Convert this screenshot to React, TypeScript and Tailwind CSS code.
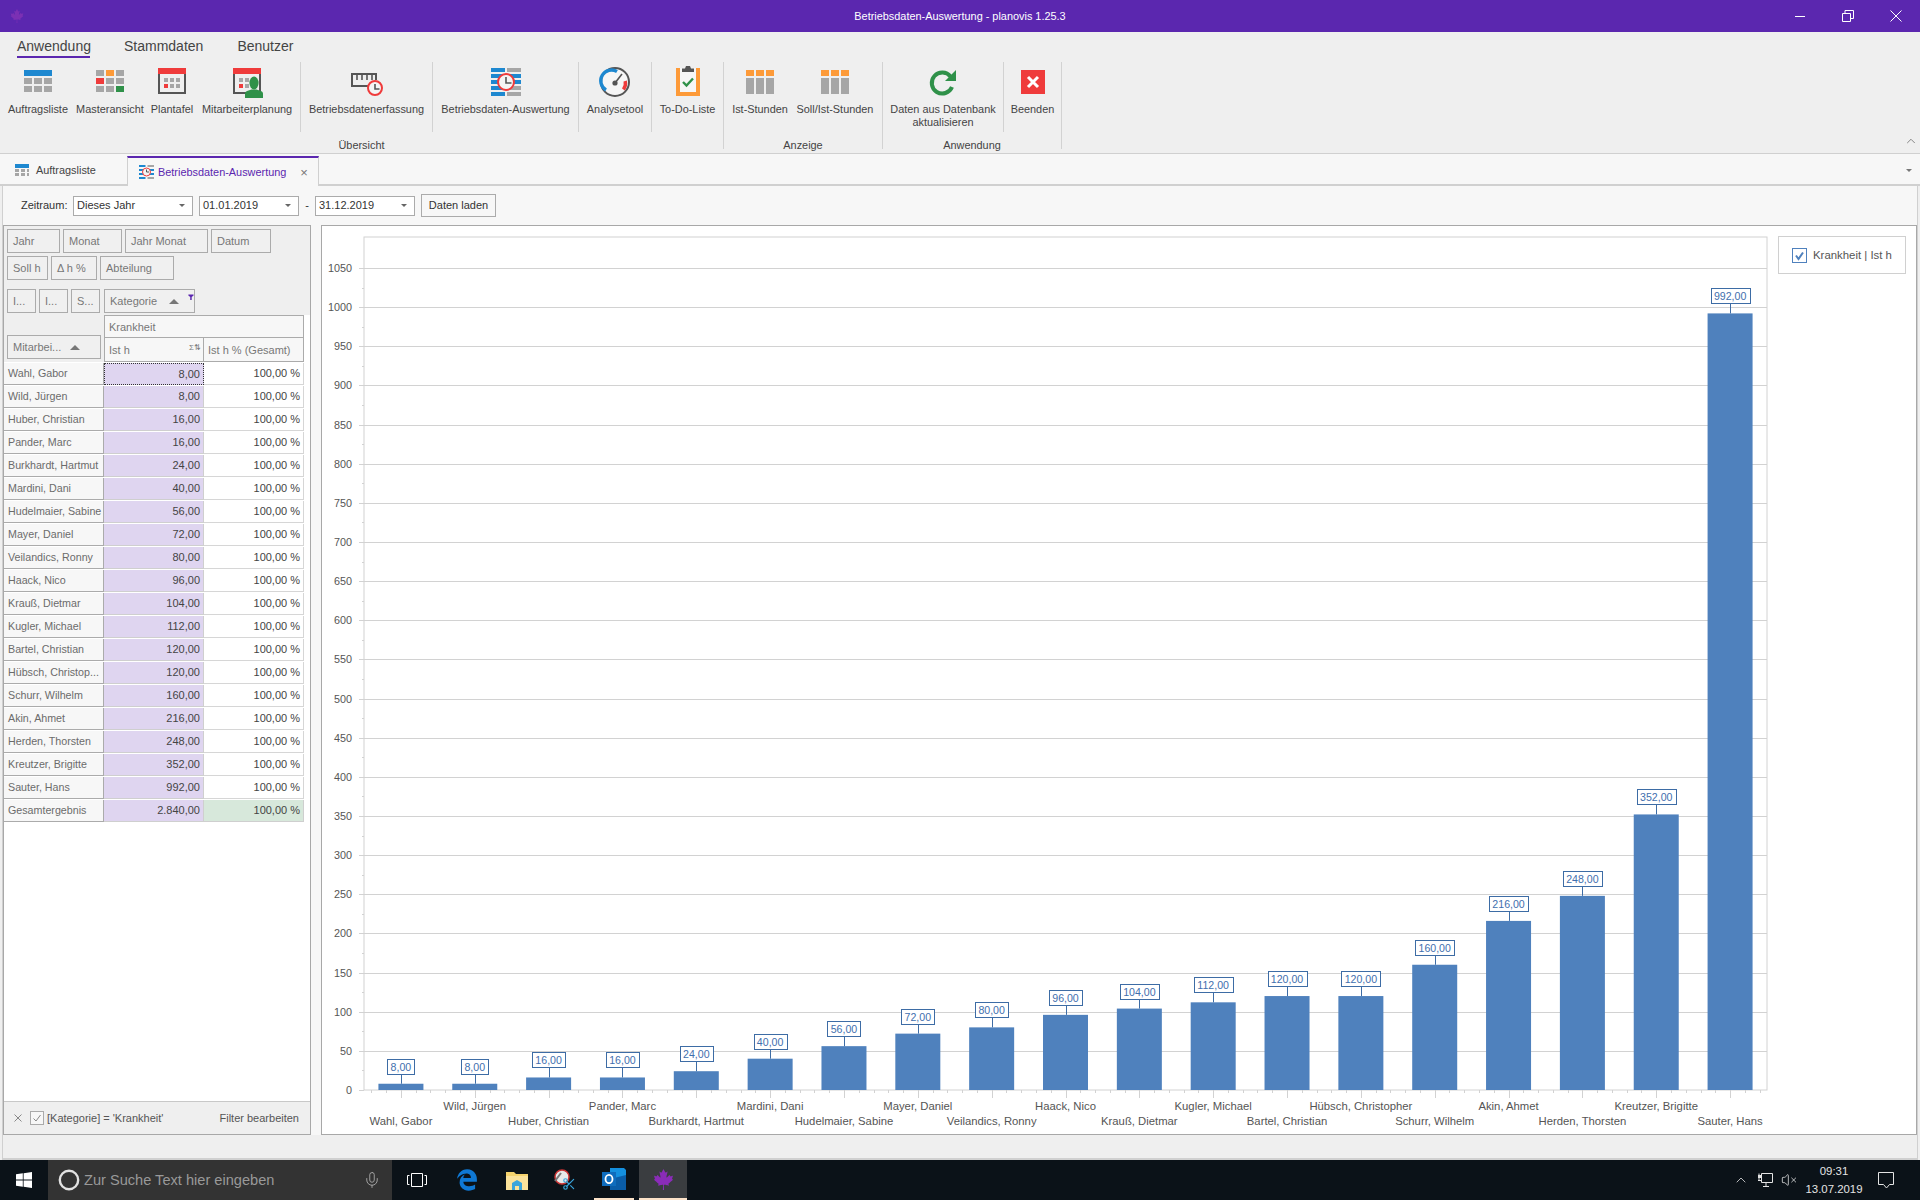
import { ChevronUp, Mic, Scissors, VolumeX } from "lucide-react";
import { FaCanadianMapleLeaf } from "react-icons/fa";
import { FaEdgeLegacy } from "react-icons/fa6";
import type { ReactNode } from "react";

const ROWS: { name: string; short?: string; value: number }[] = [
  { name: "Wahl, Gabor", value: 8 },
  { name: "Wild, Jürgen", value: 8 },
  { name: "Huber, Christian", value: 16 },
  { name: "Pander, Marc", value: 16 },
  { name: "Burkhardt, Hartmut", value: 24 },
  { name: "Mardini, Dani", value: 40 },
  { name: "Hudelmaier, Sabine", value: 56 },
  { name: "Mayer, Daniel", value: 72 },
  { name: "Veilandics, Ronny", value: 80 },
  { name: "Haack, Nico", value: 96 },
  { name: "Krauß, Dietmar", value: 104 },
  { name: "Kugler, Michael", value: 112 },
  { name: "Bartel, Christian", value: 120 },
  { name: "Hübsch, Christopher", short: "Hübsch, Christop...", value: 120 },
  { name: "Schurr, Wilhelm", value: 160 },
  { name: "Akin, Ahmet", value: 216 },
  { name: "Herden, Thorsten", value: 248 },
  { name: "Kreutzer, Brigitte", value: 352 },
  { name: "Sauter, Hans", value: 992 },
];

const GRAY = "#a6a6a6";
const RED = "#ef3b3b";
const BLUE = "#1e88d0";
const GREEN = "#2f9149";
const ORANGE = "#fd9a38";
const DARK = "#555555";

function Cells({ x, y, w, h, fills }: { x: number; y: number; w: number; h: number; fills: string[][] }) {
  return (
    <>
      {fills.map((row, r) =>
        row.map((f, c) => <rect key={`${r}-${c}`} x={x + c * (w + 2)} y={y + r * (h + 2)} width={w} height={h} fill={f} />)
      )}
    </>
  );
}

// ribbon icons use real screen coordinates in their viewBox
function RibbonSvg({ x, w, children }: { x: number; w: number; children: ReactNode }) {
  return (
    <svg width={w} height={38} viewBox={`${x} 62 ${w} 38`} className="block">
      {children}
    </svg>
  );
}

function CalendarShape({ x }: { x: number }) {
  return (
    <>
      <rect x={x + 1} y={69} width={26} height={24} fill="none" stroke={DARK} strokeWidth={2} />
      <rect x={x} y={68} width={28} height={6} fill={RED} />
      <Cells x={x + 6} y={78} w={4} h={4} fills={[[GRAY, GRAY, GRAY], [RED, GRAY, GRAY]]} />
    </>
  );
}

function ClockShape({ cx, cy, r }: { cx: number; cy: number; r: number }) {
  return (
    <>
      <circle cx={cx} cy={cy} r={r} fill="#f4f4f4" stroke={RED} strokeWidth={2} />
      <path d={`M${cx} ${cy - r + 3}V${cy + 1}H${cx + r - 2.5}`} fill="none" stroke={DARK} strokeWidth={1.6} />
    </>
  );
}

const ICONS: Record<string, ReactNode> = {
  auftrag: (
    <RibbonSvg x={18} w={40}>
      <rect x={24} y={70} width={28} height={6} fill={BLUE} />
      <Cells x={24} y={78} w={8} h={6} fills={[[GRAY, GRAY, GRAY], [GRAY, GRAY, GRAY]]} />
    </RibbonSvg>
  ),
  master: (
    <RibbonSvg x={90} w={40}>
      <Cells x={96} y={70} w={8} h={6} fills={[[GRAY, ORANGE, GRAY], [RED, GRAY, GRAY], [GRAY, GRAY, GREEN]]} />
    </RibbonSvg>
  ),
  plan: (
    <RibbonSvg x={153} w={40}>
      <CalendarShape x={159} />
    </RibbonSvg>
  ),
  mitarbeiter: (
    <RibbonSvg x={227} w={40}>
      <CalendarShape x={233} />
      <ellipse cx={254} cy={83} rx={4.6} ry={6.4} fill={GREEN} />
      <path d="M245 98v-4.5q0-2 2-2.5l4.5-1.5h5l4.5 1.5q2 .5 2 2.5V98z" fill={GREEN} />
    </RibbonSvg>
  ),
  erfassung: (
    <RibbonSvg x={346} w={40}>
      <path d="M367 86H351V74H375V80" fill="none" stroke={DARK} strokeWidth={2} />
      <path d="M356 75v5M361 75v5M366 75v5M371 75v5" stroke={DARK} strokeWidth={1.6} />
      <ClockShape cx={374} cy={88} r={7} />
    </RibbonSvg>
  ),
  auswertung: (
    <RibbonSvg x={484} w={40}>
      <Cells x={489} y={68} w={14} h={4} fills={[[BLUE, GRAY], [BLUE, BLUE], [BLUE, BLUE], [BLUE, GRAY], [BLUE, GRAY]]} />
      <ClockShape cx={504} cy={82} r={8} />
    </RibbonSvg>
  ),
  analyse: (
    <RibbonSvg x={594} w={40}>
      <circle cx={614} cy={82} r={14} fill="#f6f6f6" stroke={DARK} strokeWidth={2} />
      <path d="M605 90a10.5 10.5 0 0 1 11-18.5" fill="none" stroke={BLUE} strokeWidth={3.4} />
      <path d="M624.2 81a10.5 10.5 0 0 1-1.8 8.6" fill="none" stroke={RED} strokeWidth={3.4} />
      <path d="M614 83l7-9" stroke={DARK} strokeWidth={1.6} />
      <circle cx={614} cy={83} r={2.6} fill={DARK} />
    </RibbonSvg>
  ),
  todo: (
    <RibbonSvg x={667} w={40}>
      <rect x={675} y={68} width={24} height={28} fill={ORANGE} />
      <rect x={679} y={68} width={16} height={24} fill="#f6f6f6" />
      <path d="M681 70v-1.500h3l1-2.500h4l1 2.500h3V72h-12z" fill={DARK} />
      <path d="M682 82l3.500 3.500 6.500-7" fill="none" stroke={GREEN} strokeWidth={2.4} />
    </RibbonSvg>
  ),
  ist: (
    <RibbonSvg x={740} w={40}>
      <Cells x={746} y={70} w={8} h={6} fills={[[ORANGE, ORANGE, ORANGE]]} />
      <Cells x={746} y={78} w={8} h={16} fills={[[GRAY, GRAY, GRAY]]} />
    </RibbonSvg>
  ),
  soll: (
    <RibbonSvg x={815} w={40}>
      <Cells x={821} y={70} w={8} h={6} fills={[[ORANGE, ORANGE, ORANGE]]} />
      <Cells x={821} y={78} w={8} h={16} fills={[[GRAY, GRAY, GRAY]]} />
    </RibbonSvg>
  ),
  refresh: (
    <RibbonSvg x={924} w={40}>
      <path d="M951.500 76.500A10.500 10.500 0 1 0 953 87" fill="none" stroke={GREEN} strokeWidth={4} />
      <path d="M957 70v11h-11z" fill={GREEN} />
    </RibbonSvg>
  ),
  beenden: (
    <RibbonSvg x={1013} w={40}>
      <rect x={1021} y={70} width={24} height={24} fill={RED} />
      <path d="M1028 77l10 10M1038 77l-10 10" stroke="#ffffff" strokeWidth={3} />
    </RibbonSvg>
  ),
};

function RibbonItem({ w, icon, children }: { w: number; icon: string; children: ReactNode }) {
  return (
    <div className="flex h-[70px] shrink-0 flex-col items-center" style={{ width: w }}>
      {ICONS[icon]}
      <div className="mt-[3px] whitespace-nowrap text-center text-[10.9px] leading-[13px] text-[#444]">{children}</div>
    </div>
  );
}

function RibbonSep() {
  return <div className="h-[70px] w-px shrink-0 bg-[#d2d2d2]" />;
}

function RibbonGroup({ label, children, className }: { label: string; children: ReactNode; className: string }) {
  return (
    <div className={`flex shrink-0 flex-col border-r border-[#d2d2d2] ${className}`}>
      <div className="flex h-[70px]">{children}</div>
      <div className="h-[17px] pt-[7px] text-center text-[10.9px] leading-[13px] text-[#444]">{label}</div>
    </div>
  );
}

function Ribbon() {
  return (
    <div className="h-[122px] shrink-0 border-b border-[#d0d0d0] bg-[#efefef]">
      <div className="flex h-[30px] pl-[17px] text-[14px] text-[#444]">
        <div className="h-[26px] w-[73px] whitespace-nowrap border-b-2 border-[#5b27af] pt-[6px] leading-[16px]">Anwendung</div>
        <div className="ml-[34px] pt-[6px] leading-[16px]">Stammdaten</div>
        <div className="ml-[34px] pt-[6px] leading-[16px]">Benutzer</div>
      </div>
      <div className="flex h-[87px]">
        <RibbonGroup label="Übersicht" className="w-[724px]">
          <div className="w-[4px] shrink-0" />
          <RibbonItem w={68} icon="auftrag">Auftragsliste</RibbonItem>
          <RibbonItem w={76} icon="master">Masteransicht</RibbonItem>
          <RibbonItem w={48} icon="plan">Plantafel</RibbonItem>
          <RibbonItem w={102} icon="mitarbeiter">Mitarbeiterplanung</RibbonItem>
          <div className="w-[2px] shrink-0" />
          <RibbonSep />
          <RibbonItem w={131} icon="erfassung">Betriebsdatenerfassung</RibbonItem>
          <RibbonSep />
          <RibbonItem w={145} icon="auswertung">Betriebsdaten-Auswertung</RibbonItem>
          <RibbonSep />
          <RibbonItem w={72} icon="analyse">Analysetool</RibbonItem>
          <RibbonSep />
          <RibbonItem w={71} icon="todo">To-Do-Liste</RibbonItem>
        </RibbonGroup>
        <RibbonGroup label="Anzeige" className="w-[159px]">
          <RibbonItem w={72} icon="ist">Ist-Stunden</RibbonItem>
          <RibbonItem w={78} icon="soll">Soll/Ist-Stunden</RibbonItem>
        </RibbonGroup>
        <RibbonGroup label="Anwendung" className="w-[179px]">
          <RibbonItem w={120} icon="refresh">
            Daten aus Datenbank
            <br />
            aktualisieren
          </RibbonItem>
          <RibbonSep />
          <RibbonItem w={57} icon="beenden">Beenden</RibbonItem>
        </RibbonGroup>
        <div className="ml-auto flex items-end pb-[1px] pr-[2px]">
          <ChevronUp size={14} strokeWidth={1.5} className="text-[#777]" />
        </div>
      </div>
    </div>
  );
}

function TitleBar() {
  return (
    <div className="grid h-[32px] shrink-0 grid-cols-[1fr_auto_1fr] items-center bg-[#5b27af] text-white">
      <div className="pl-[10px]">
        <FaCanadianMapleLeaf size={14} className="text-[#7b30b4]" />
      </div>
      <div className="text-[10.9px]">Betriebsdaten-Auswertung - planovis 1.25.3</div>
      <div className="flex justify-end">
        <div className="flex h-[32px] w-[48px] items-center justify-center">
          <div className="h-px w-[10px] bg-white" />
        </div>
        <div className="flex h-[32px] w-[48px] items-center justify-center">
          <svg width="12" height="12" viewBox="0 0 12 12" fill="none" stroke="#ffffff">
            <path d="M.5 3.500h8v8h-8zM3 3.500V.5h8.500v8H8.500" />
          </svg>
        </div>
        <div className="flex h-[32px] w-[48px] items-center justify-center">
          <svg width="12" height="12" viewBox="0 0 12 12" fill="none" stroke="#ffffff">
            <path d="M.5.5l11 11M11.500.5l-11 11" />
          </svg>
        </div>
      </div>
    </div>
  );
}

function TabBar() {
  return (
    <div className="flex h-[32px] shrink-0 border-b-2 border-[#d0d0d0] bg-[#f7f7f7] text-[10.9px]">
      <div className="flex w-[127px] items-center pt-[2px]">
        <svg width="14" height="12" viewBox="0 0 14 12" className="ml-[15px]">
          <rect width="14" height="4" fill={BLUE} />
          <Cells x={0} y={5} w={4} h={3} fills={[[GRAY, GRAY, GRAY]]} />
          <Cells x={0} y={9} w={4} h={3} fills={[[GRAY, GRAY, GRAY]]} />
        </svg>
        <span className="ml-[7px] text-[#444]">Auftragsliste</span>
      </div>
      <div className="z-10 mt-[2px] flex h-[30px] w-[192px] items-center border-x border-t-2 border-x-[#d0d0d0] border-t-[#5b27af] bg-[#f7f7f7]">
        <svg width="15" height="14" viewBox="0 0 15 14" className="ml-[11px]">
          <Cells x={0} y={0} w={6.500} h={2} fills={[[BLUE, GRAY], [BLUE, BLUE], [BLUE, BLUE], [BLUE, GRAY], [BLUE, GRAY]]} />
          <circle cx="7.500" cy="7" r="4" fill="#f4f4f4" stroke={RED} />
          <path d="M7.500 4.500V7H10" fill="none" stroke={DARK} />
        </svg>
        <span className="ml-[4px] text-[#5b27af]">Betriebsdaten-Auswertung</span>
        <span className="ml-[14px] text-[13px] leading-none text-[#777]">×</span>
      </div>
      <div className="ml-auto flex items-center pr-[8px] pt-[2px]">
        <div className="h-0 w-0 border-x-[3px] border-t-[3px] border-x-transparent border-t-[#777]" />
      </div>
    </div>
  );
}

function Combo({ w, children }: { w: number; children: ReactNode }) {
  return (
    <div className="flex h-[20px] shrink-0 items-center justify-between border border-[#ababab] bg-white pl-[3px] pr-[7px] text-[#333]" style={{ width: w }}>
      <span>{children}</span>
      <div className="h-0 w-0 border-x-[3px] border-t-[3px] border-x-transparent border-t-[#666]" />
    </div>
  );
}

function Toolbar() {
  return (
    <div className="flex h-[39px] shrink-0 items-center bg-[#f7f7f7] pl-[18px] text-[11px] text-[#333]">
      <span className="w-[52px]">Zeitraum:</span>
      <Combo w={120}>Dieses Jahr</Combo>
      <div className="w-[6px]" />
      <Combo w={100}>01.01.2019</Combo>
      <span className="w-[16px] text-center">-</span>
      <Combo w={100}>31.12.2019</Combo>
      <div className="ml-[6px] flex h-[23px] w-[75px] items-center justify-center border border-[#ababab] bg-[#f7f7f7]">Daten laden</div>
    </div>
  );
}

function SortArrow() {
  return <div className="h-0 w-0 border-x-[5px] border-b-[5px] border-x-transparent border-b-[#777]" />;
}

function FieldButton({ w, children }: { w: number; children: ReactNode }) {
  return (
    <div className="flex h-[24px] shrink-0 items-center border border-[#ababab] bg-[#f0f0f0] pl-[5px] pt-[1px] text-[#777]" style={{ width: w }}>
      {children}
    </div>
  );
}

function fmt(v: number) {
  return v.toLocaleString("de-DE", { minimumFractionDigits: 2, maximumFractionDigits: 2 });
}

function PivotGrid() {
  return (
    <div className="flex w-[308px] shrink-0 flex-col border border-[#a8a8a8] bg-white text-[11px]">
      <div className="h-[89px] shrink-0 bg-[#efefef] pl-[3px] pt-[3px]">
        <div className="flex gap-[3px]">
          <FieldButton w={53}>Jahr</FieldButton>
          <FieldButton w={59}>Monat</FieldButton>
          <FieldButton w={83}>Jahr Monat</FieldButton>
          <FieldButton w={60}>Datum</FieldButton>
        </div>
        <div className="mt-[3px] flex gap-[3px]">
          <FieldButton w={41}>Soll h</FieldButton>
          <FieldButton w={46}>Δ h %</FieldButton>
          <FieldButton w={74}>Abteilung</FieldButton>
        </div>
        <div className="mt-[9px] flex gap-[3px]">
          <FieldButton w={29}>I...</FieldButton>
          <FieldButton w={29}>I...</FieldButton>
          <FieldButton w={29}>S...</FieldButton>
          <div className="ml-[1px] flex h-[24px] w-[91px] items-center border border-[#ababab] bg-[#f0f0f0] pl-[5px] pt-[1px] text-[#777]">
            Kategorie
            <span className="ml-[12px]"><SortArrow /></span>
            <svg width="8" height="8" viewBox="0 0 8 8" className="mb-[9px] ml-[9px]">
              <path d="M.5.5h7v1.500L5 4v4H3V4L.5 2z" fill="#5b27af" />
            </svg>
          </div>
        </div>
      </div>
      <div className="grid h-[47px] shrink-0 grid-cols-[100px_100px_100px]">
        <div className="flex items-end bg-[#efefef] pb-[3px] pl-[3px]">
          <div className="flex h-[24px] w-[94px] items-center border border-[#ababab] bg-[#f0f0f0] pl-[5px] pt-[1px] text-[#777]">
            Mitarbei...
            <span className="ml-[9px]"><SortArrow /></span>
          </div>
        </div>
        <div className="col-span-2 flex flex-col">
          <div className="flex h-[23px] items-center border border-[#ababab] bg-[#f7f7f7] pl-[4px] pt-[1px] text-[#777]">Krankheit</div>
          <div className="grid h-[24px] grid-cols-2 border-x border-b border-[#ababab] bg-[#f7f7f7] text-[#777]">
            <div className="flex items-center justify-between border-r border-[#ababab] pl-[4px] pr-[2px] pt-[1px]">
              Ist h
              <span className="mb-[5px] text-[8px] leading-none">Σ⇅</span>
            </div>
            <div className="flex items-center pl-[4px] pt-[1px]">Ist h % (Gesamt)</div>
          </div>
        </div>
      </div>
      {ROWS.map((row, i) => (
        <div key={row.name} className="grid h-[23px] shrink-0 grid-cols-[100px_100px_100px] pt-px">
          <div className="flex items-center whitespace-nowrap border-b border-r border-[#ababab] bg-[#f7f7f7] pl-[4px] text-[10.7px] text-[#6b6b6b]">
            {row.short ?? row.name}
          </div>
          <div className={`flex items-center justify-end bg-[#dfd5f0] pr-[3px] text-[#444] ${i === 0 ? "border border-dotted border-[#333]" : "border-b border-r border-[#cfcfcf]"}`}>
            {fmt(row.value)}
          </div>
          <div className="flex items-center justify-end border-b border-r border-[#d6d6d6] bg-white pr-[3px] text-[#444]">100,00 %</div>
        </div>
      ))}
      <div className="grid h-[23px] shrink-0 grid-cols-[100px_100px_100px] pt-px">
        <div className="flex items-center border-b border-r border-[#ababab] bg-[#f7f7f7] pl-[4px] text-[10.7px] text-[#6b6b6b]">Gesamtergebnis</div>
        <div className="flex items-center justify-end border-b border-r border-[#cfcfcf] bg-[#dfd5f0] pr-[3px] text-[#444]">2.840,00</div>
        <div className="flex items-center justify-end border-b border-r border-[#cfcfcf] bg-[#d7e8db] pr-[3px] text-[#444]">100,00 %</div>
      </div>
      <div className="mt-auto flex h-[33px] shrink-0 items-center border-t border-[#c8c8c8] bg-[#efefef] pl-[10px] pr-[11px] text-[#555]">
        <svg width="8" height="8" viewBox="0 0 8 8" stroke="#888" fill="none">
          <path d="M.5.5l7 7M7.500.5l-7 7" />
        </svg>
        <svg width="14" height="14" viewBox="0 0 14 14" className="ml-[8px]">
          <rect x=".5" y=".5" width="13" height="13" fill="#f7f7f7" stroke="#aaa" />
          <path d="M3.500 7.500l2.500 2.500 4.500-6" fill="none" stroke="#888" />
        </svg>
        <span className="ml-[3px]">[Kategorie] = 'Krankheit'</span>
        <span className="ml-auto">Filter bearbeiten</span>
      </div>
    </div>
  );
}

const X0 = 364;
const X1 = 1767;
const Y0 = 1090;
const Y_TOP = 237;
const SCALE = (1090 - 268) / 1050;
const SLOT = (X1 - X0) / ROWS.length;
const LINE = "#d2d2d2";

function Chart() {
  const gridValues = Array.from({ length: 21 }, (_, i) => (i + 1) * 50);
  const minorValues = Array.from({ length: 43 }, (_, i) => i * 25).filter((v) => v % 50 !== 0);
  return (
    <svg width={1450} height={908} viewBox="322 226 1450 908" className="block shrink-0">
      <rect x={X0} y={Y_TOP} width={X1 - X0} height={Y0 - Y_TOP} fill="none" stroke={LINE} />
      {gridValues.map((v) => {
        const y = Math.round(Y0 - v * SCALE) + 0.5;
        return <path key={v} d={`M359 ${y}H${X1}`} stroke={LINE} fill="none" />;
      })}
      <path d={`M359 ${Y0 + 0.5}H${X0}`} stroke={LINE} />
      {minorValues.map((v) => {
        const y = Math.round(Y0 - v * SCALE) + 0.5;
        return <path key={v} d={`M362 ${y}H${X0}`} stroke={LINE} />;
      })}
      {[0, ...gridValues].map((v) => (
        <text key={v} x={352} y={Y0 - v * SCALE + 4} textAnchor="end" fontSize={10.8} fill="#555">
          {v}
        </text>
      ))}
      {ROWS.map((row, i) => {
        const cx = X0 + SLOT * (i + 0.5);
        const top = Y0 - row.value * SCALE;
        const label = fmt(row.value);
        const bw = (label.length - 1) * 5.8 + 3 + 7;
        const ticks = [-2, -1, 1, 2].map((k) => Math.round(cx + (k * SLOT) / 5) + 0.5);
        return (
          <g key={row.name}>
            <rect x={cx - 22.5} y={top} width={45} height={Y0 - top} fill="#4f81bd" />
            <path d={`M${Math.round(cx) + 0.5} ${top - 10}V${top}`} stroke="#3d6ca5" />
            <rect x={Math.round(cx - bw / 2) + 0.5} y={Math.round(top - 25) + 0.5} width={Math.round(bw)} height={15} fill="#ffffff" stroke="#3d6ca5" />
            <text x={cx} y={top - 13} textAnchor="middle" fontSize={10.6} fill="#3f6fae">
              {label}
            </text>
            <path d={`M${Math.round(cx) + 0.5} ${Y0}v8`} stroke={LINE} />
            {ticks.map((t) => (
              <path key={t} d={`M${t} ${Y0}v3`} stroke={LINE} />
            ))}
            <text x={cx} y={i % 2 === 0 ? 1125 : 1110} textAnchor="middle" fontSize={11.3} fill="#555">
              {row.name}
            </text>
          </g>
        );
      })}
    </svg>
  );
}

function ChartPanel() {
  return (
    <div className="flex flex-1 border border-[#a8a8a8] bg-white">
      <Chart />
      <div className="ml-[6px] mt-[10px] flex h-[38px] w-[128px] items-center border border-[#d0d0d0] pl-[13px] text-[11.4px] text-[#555]">
        <svg width="15" height="15" viewBox="0 0 15 15">
          <rect x=".5" y=".5" width="14" height="14" fill="#ffffff" stroke="#4f81bd" />
          <path d="M4 7.500l2.500 3.500L11 4.500" fill="none" stroke="#4f81bd" strokeWidth="2" />
        </svg>
        <span className="ml-[6px] pt-px">Krankheit | Ist h</span>
      </div>
    </div>
  );
}

function Tile({ w, children }: { w: number; children: ReactNode }) {
  return (
    <div className="flex h-[40px] shrink-0 items-center justify-center" style={{ width: w }}>
      {children}
    </div>
  );
}

function Taskbar() {
  return (
    <div className="flex h-[40px] shrink-0 bg-[#0b1218]">
      <div className="flex w-[48px] items-center justify-center">
        <svg width="16" height="16" viewBox="0 0 16 16" fill="#ffffff">
          <path d="M0 2.300l6.800-1V7.500H0zM7.600 1.200L16 0v7.500H7.600zM0 8.400h6.800v6.300l-6.800-1zM7.600 8.400H16V16l-8.400-1.200z" />
        </svg>
      </div>
      <div className="flex w-[344px] items-center bg-[#333333] pl-[10px]">
        <svg width="22" height="22" viewBox="0 0 22 22" fill="none">
          <circle cx="11" cy="11" r="9.200" stroke="#e2e2e2" strokeWidth="2.400" />
        </svg>
        <span className="ml-[4px] pt-[2px] text-[14.6px] text-[#999]">Zur Suche Text hier eingeben</span>
        <Mic size={18} strokeWidth={1.2} className="ml-auto mr-[11px] text-[#aaa]" />
      </div>
      <Tile w={49}>
        <svg width="20" height="14" viewBox="0 0 20 14" fill="none" stroke="#ffffff">
          <path d="M4.500.5h11v13h-11zM2.500 2.500H.5v9h2M17.500 2.500h2v9h-2" />
        </svg>
      </Tile>
      <Tile w={52}>
        <FaEdgeLegacy size={22} className="text-[#0f78d4]" />
      </Tile>
      <Tile w={47}>
        <svg width="22" height="19" viewBox="0 0 22 19">
          <path d="M0 1h8l2 2h12v16H0z" fill="#f5d36d" />
          <path d="M0 5h22v14H0z" fill="#fbe29a" />
          <path d="M6 19v-7l5-3 5 3v7h-3v-4H9v4z" fill="#3aa5dc" />
        </svg>
      </Tile>
      <Tile w={49}>
        <div className="relative h-[22px] w-[23px]">
          <svg width="18" height="16" viewBox="0 0 18 16" className="absolute left-0 top-0">
            <circle cx="9" cy="8" r="7" fill="#e8e8e8" stroke="#c33" strokeWidth="1.500" />
            <path d="M2 12l6-8" stroke="#777" strokeWidth="2" />
          </svg>
          <Scissors size={14} className="absolute bottom-0 right-0 text-[#3aa5dc]" />
        </div>
      </Tile>
      <div className="flex h-[40px] w-[50px] shrink-0 flex-col items-center">
        <div className="flex h-[38px] items-center">
          <svg width="24" height="22" viewBox="0 0 24 22">
            <path d="M8 0h14l2 2v10l-6 8H8z" fill="#1490df" />
            <path d="M8 11l16-4v15H8z" fill="#0a5da8" />
            <rect y="4" width="14" height="14" fill="#0f6cbd" />
            <ellipse cx="7" cy="11" rx="3.500" ry="4.200" fill="none" stroke="#ffffff" strokeWidth="1.800" />
          </svg>
        </div>
        <div className="h-[2px] w-[40px] bg-[#fbe2c8]" />
      </div>
      <div className="flex h-[40px] w-[48px] shrink-0 flex-col items-center bg-[#3a3d40]">
        <div className="flex h-[38px] items-center">
          <FaCanadianMapleLeaf size={21} className="text-[#8a2cb8]" />
        </div>
        <div className="h-[2px] w-full bg-[#fbe2c8]" />
      </div>
      <div className="ml-auto flex items-center pr-[16px] text-[#e4e4e4]">
        <Tile w={24}>
          <ChevronUp size={16} strokeWidth={1.2} />
        </Tile>
        <Tile w={24}>
          <svg width="16" height="16" viewBox="0 0 16 16" fill="none" stroke="#e4e4e4">
            <path d="M4.500 1.500h11v9h-11M4.500 1.500v9M2 1.500V8M1 8.500h3M6 14.500h6M9 10.500v4" />
            <rect x="1" y="3" width="3" height="3" fill="#e4e4e4" stroke="none" />
          </svg>
        </Tile>
        <Tile w={23}>
          <VolumeX size={16} strokeWidth={1.2} />
        </Tile>
        <div className="w-[68px] text-center text-[11.4px] leading-[18px]">
          <div>09:31</div>
          <div>13.07.2019</div>
        </div>
        <div className="flex h-[40px] w-[36px] items-center justify-center">
          <svg width="16" height="17" viewBox="0 0 16 17" fill="none" stroke="#e4e4e4">
            <path d="M.5.5h15v12h-4l-3 3.500-3-3.500h-5z" />
          </svg>
        </div>
      </div>
    </div>
  );
}

export default function App() {
  return (
    <div className="flex h-[1200px] w-[1920px] flex-col overflow-hidden bg-[#efefef] font-['Liberation_Sans',Arial,sans-serif]">
      <TitleBar />
      <Ribbon />
      <TabBar />
      <div className="mx-[2px] flex flex-1 flex-col border-x border-b-2 border-[#d0d0d0]">
        <Toolbar />
        <div className="flex h-[910px] shrink-0">
          <PivotGrid />
          <div className="w-[10px] shrink-0 bg-[#f7f7f7]" />
          <ChartPanel />
        </div>
        <div className="flex-1 bg-[#efefef]" />
      </div>
      <Taskbar />
    </div>
  );
}
